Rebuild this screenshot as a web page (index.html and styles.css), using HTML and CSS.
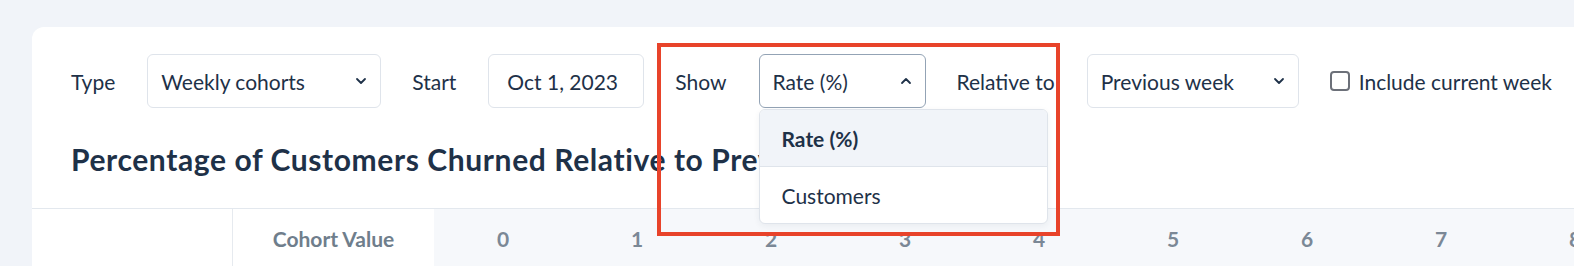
FILE: index.html
```html
<!DOCTYPE html>
<html lang="en">
<head>
<meta charset="utf-8">
<title>Cohort churn</title>
<link rel="stylesheet" href="styles.css">
</head>
<body>
<div class="card">
  <div class="toolbar">
    <span class="label">Type</span>
    <div class="select type-select">
      <span>Weekly cohorts</span>
      <svg class="chev" viewBox="0 0 12 8" width="12" height="8"><path d="M2 2 L6 6 L10 2" /></svg>
    </div>
    <span class="label">Start</span>
    <div class="select date-select"><span>Oct 1, 2023</span></div>
    <span class="label">Show</span>
    <div class="select-wrap">
      <div class="select show-select">
        <span>Rate (%)</span>
        <svg class="chev" viewBox="0 0 12 8" width="12" height="8"><path d="M2 6 L6 2 L10 6" /></svg>
      </div>
      <div class="menu">
        <div class="menu-item active">Rate (%)</div>
        <div class="menu-item">Customers</div>
      </div>
    </div>
    <span class="label">Relative to</span>
    <div class="select rel-select">
      <span>Previous week</span>
      <svg class="chev" viewBox="0 0 12 8" width="12" height="8"><path d="M2 2 L6 6 L10 2" /></svg>
    </div>
    <label class="check-label"><span class="check"></span>Include current week</label>
  </div>
  <h2 class="title">Percentage of Customers Churned Relative to Previous Week</h2>
  <div class="table-head">
    <div class="stub"></div>
    <div class="cohort-col">Cohort Value</div>
    <div class="num">0</div>
    <div class="num">1</div>
    <div class="num">2</div>
    <div class="num">3</div>
    <div class="num">4</div>
    <div class="num">5</div>
    <div class="num">6</div>
    <div class="num">7</div>
    <div class="num">8</div>
  </div>
</div>
<div class="highlight"></div>
</body>
</html>
```
FILE: styles.css
```css
html, body {
  margin: 0;
  padding: 0;
}
body {
  background: #f1f4f9;
  font-family: Lato, "Noto Sans", sans-serif;
  color: #1e3148;
  height: 266px;
  overflow: hidden;
  position: relative;
}
.card {
  margin: 27px 0 0 32px;
  width: 1700px;
  height: 239px;
  background: #ffffff;
  border-top-left-radius: 12px;
}
.toolbar {
  display: flex;
  align-items: center;
  padding: 27px 0 0 39px;
}
.label {
  font-size: 21px;
  margin-right: 32px;
  white-space: nowrap;
}
.select {
  box-sizing: border-box;
  height: 54px;
  border: 1px solid #dfe4eb;
  border-radius: 6px;
  display: flex;
  align-items: center;
  justify-content: space-between;
  padding: 0 13px 0 13px;
  font-size: 21px;
  margin-right: 31px;
  background: #fff;
  white-space: nowrap;
  flex-shrink: 0;
}
.type-select { width: 234px; }
.date-select { width: 156px; padding-left: 18px; }
.rel-select { width: 212px; }
.select-wrap {
  position: relative;
  margin-right: 31px;
}
.show-select {
  width: 167px;
  margin-right: 0;
  border-color: #93a3b5;
}
.chev {
  fill: none;
  stroke: #1e3148;
  stroke-width: 1.8;
  stroke-linecap: round;
  stroke-linejoin: round;
}
.menu {
  position: absolute;
  top: calc(100% + 1px);
  left: 0;
  width: 289px;
  box-sizing: border-box;
  border: 1px solid #dfe4eb;
  border-radius: 6px;
  background: #fff;
  overflow: hidden;
  z-index: 5;
  box-shadow: 0 2px 6px rgba(30, 49, 72, 0.06);
}
.menu-item {
  height: 56px;
  display: flex;
  align-items: center;
  padding-left: 22px;
  font-size: 21px;
}
.menu-item.active {
  background: #f1f4f9;
  font-weight: 700;
  border-bottom: 1px solid #dfe4eb;
}
.check-label {
  display: flex;
  align-items: center;
  font-size: 21px;
  white-space: nowrap;
}
.check {
  box-sizing: border-box;
  width: 20px;
  height: 20px;
  border: 2px solid #6c7079;
  border-radius: 4px;
  margin-right: 9px;
}
.title {
  margin: 33px 0 0 39px;
  font-size: 30px;
  letter-spacing: 0.6px;
  line-height: 36px;
  font-weight: 700;
  white-space: nowrap;
}
.table-head {
  margin-top: 31px;
  display: flex;
  border-top: 1px solid #e3e8ee;
  height: 80px;
}
.stub {
  width: 200px;
  flex-shrink: 0;
}
.cohort-col {
  box-sizing: border-box;
  width: 202px;
  flex-shrink: 0;
  border-left: 1px solid #e6eaef;
  text-align: center;
  padding-top: 18px;
  font-size: 21px;
  line-height: 24px;
  font-weight: 700;
  color: #6f7e8c;
}
.num {
  width: 134px;
  flex-shrink: 0;
  background: #f6f8fb;
  text-align: center;
  padding: 18px 0 0 4px;
  box-sizing: border-box;
  font-size: 21px;
  line-height: 24px;
  font-weight: 700;
  color: #7b8896;
}
.highlight {
  position: absolute;
  left: 657px;
  top: 43px;
  width: 403px;
  height: 193px;
  box-sizing: border-box;
  border: 4px solid #e8432a;
  z-index: 10;
}
```
